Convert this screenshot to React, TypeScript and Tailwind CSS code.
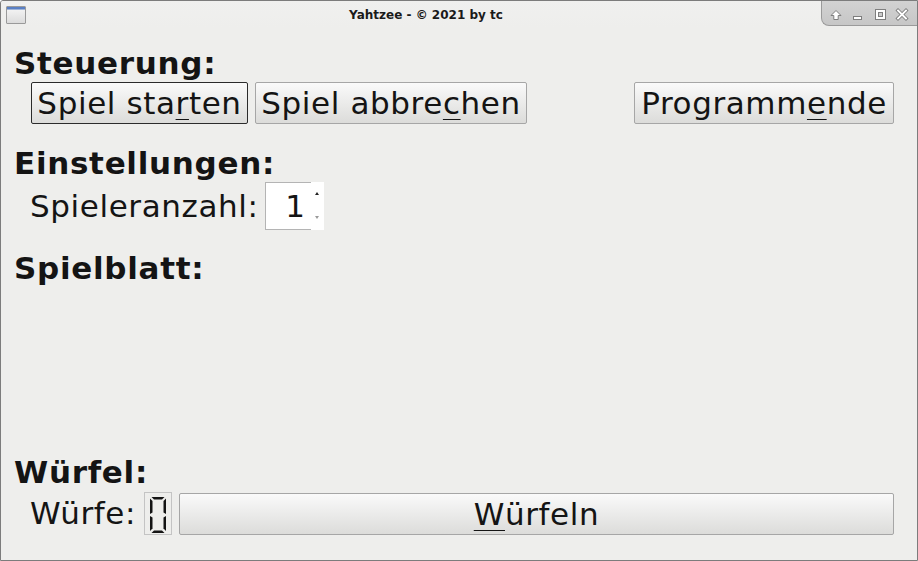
import React from "react";

function U({ children }: { children: React.ReactNode }) {
  return <span className="underline decoration-1 underline-offset-[5px]">{children}</span>;
}

function Btn({ w, focused, children }: { w?: string; focused?: boolean; children: React.ReactNode }) {
  return (
    <div
      className={
        "h-[42px] flex items-center justify-center rounded-[2px] border bg-linear-to-b from-[#fafafa] to-[#dcdcda] text-[31px] leading-none tracking-[0.6px] whitespace-nowrap " +
        (focused ? "border-[#2b2b2b] " : "border-[#a6a6a6] ") +
        (w ?? "")
      }
    >
      {children}
    </div>
  );
}

function Heading({ children, cls }: { children: React.ReactNode; cls?: string }) {
  return (
    <div className={"h-[38px] flex items-center text-[31px] font-bold tracking-[0.7px] leading-none " + (cls ?? "")}>
      {children}
    </div>
  );
}

function Lcd() {
  const c = "#141414";
  return (
    <div className="w-[28px] h-[43px] border border-[#c4c4c4] shrink-0">
      <svg width="26" height="41" viewBox="0 0 26 41">
        <polygon points="6.5,4 19.5,4 17,6.5 9,6.5" fill={c} />
        <polygon points="5,5.5 7.5,8 7.5,19.5 5,21" fill={c} />
        <polygon points="21,5.5 18.5,8 18.5,19.5 21,21" fill={c} />
        <polygon points="5,23 7.5,24.5 7.5,35.5 5,38" fill={c} />
        <polygon points="21,23 18.5,24.5 18.5,35.5 21,38" fill={c} />
        <polygon points="9,37.5 17,37.5 19.5,40 6.5,40" fill={c} />
      </svg>
    </div>
  );
}

export default function App() {
  return (
    <div className="w-[918px] h-[561px] bg-[#eeeeec] border border-[#7c7c7c] rounded-tl-[3px] flex flex-col font-['DejaVu_Sans',sans-serif] text-[#141414] overflow-hidden">
      {/* title bar */}
      <div className="h-[27px] shrink-0 flex items-start bg-linear-to-b from-[#f0f0ef] to-[#eeeeec]">
        <div className="w-[30px] pl-[5px] pt-[5px] shrink-0">
          <div className="w-[20px] h-[18px] border border-[#9a9a9a] rounded-[1px] bg-linear-to-b from-[#f7f7f7] to-[#dcdcdc] overflow-hidden">
            <div className="h-[3px] bg-[#5a80c4] border-b border-[#9fb4d8]" />
          </div>
        </div>
        <div className="flex-1 text-center text-[12px] font-bold leading-[29px] text-[#1a1a1a]">
          Yahtzee - © 2021 by tc
        </div>
        <div className="w-[96px] h-[25px] shrink-0 bg-linear-to-b from-[#d2d2d2] to-[#c6c6c6] border-l border-b border-[#9a9a9a] rounded-bl-[8px]">
          <svg width="96" height="25" viewBox="0 0 96 25">
            {/* up arrow */}
            <path d="M14 9.5 L19 14.5 L16.2 14.5 L16.2 18.5 L11.8 18.5 L11.8 14.5 L9 14.5 Z" fill="#ffffff" stroke="#7e7e7e" strokeWidth="1" strokeLinejoin="round" />
            {/* minimize */}
            <rect x="31.5" y="15.5" width="8" height="3" fill="#ffffff" stroke="#7e7e7e" strokeWidth="1" />
            {/* maximize */}
            <rect x="53.5" y="8.5" width="10" height="10" fill="none" stroke="#7e7e7e" strokeWidth="1" />
            <rect x="55" y="10" width="7" height="7" fill="none" stroke="#ffffff" strokeWidth="2" />
            <rect x="56.5" y="11.5" width="4" height="4" fill="none" stroke="#7e7e7e" strokeWidth="1" />
            {/* close */}
            <path d="M76 9.5 L84 17.5 M84 9.5 L76 17.5" stroke="#7e7e7e" strokeWidth="3.6" strokeLinecap="square" />
            <path d="M76 9.5 L84 17.5 M84 9.5 L76 17.5" stroke="#ffffff" strokeWidth="1.8" strokeLinecap="square" />
          </svg>
        </div>
      </div>

      {/* body */}
      <div className="flex-1 flex flex-col pl-[13px] pr-[23px] pb-[24px]">
        <Heading cls="mt-[16px] h-[37px]">Steuerung:</Heading>
        <div className="flex items-center pl-[17px] gap-[7px]">
          <Btn w="w-[217px]" focused>
            Spiel sta<U>r</U>ten
          </Btn>
          <Btn w="w-[272px]">
            Spiel abbre<U>c</U>hen
          </Btn>
          <div className="flex-1" />
          <Btn w="w-[260px]">
            Programm<U>e</U>nde
          </Btn>
        </div>
        <Heading cls="mt-[20px]">Einstellungen:</Heading>
        <div className="h-[48px] flex items-center pl-[16px]">
          <div className="w-[235px] text-[31px] leading-none tracking-[0.6px]">Spieleranzahl:</div>
          <div className="h-[48px] w-[59px] flex bg-white">
            <div className="flex-1 border border-r-0 border-[#b4b4b4] flex items-center justify-end pr-[6px] text-[31px] leading-none">
              1
            </div>
            <div className="w-[13px] relative">
              <div className="absolute left-[4px] top-[10px] w-0 h-0 border-l-[2px] border-r-[2px] border-b-[3px] border-l-transparent border-r-transparent border-b-[#222]" />
              <div className="absolute left-[4px] top-[34px] w-0 h-0 border-l-[2px] border-r-[2px] border-t-[3px] border-l-transparent border-r-transparent border-t-[#9a9a9a]" />
            </div>
          </div>
        </div>
        <Heading cls="mt-[19px]">Spielblatt:</Heading>
        <div className="flex-1" />
        <Heading>Würfel:</Heading>
        <div className="h-[45px] flex items-center pl-[16px]">
          <div className="w-[114px] text-[31px] leading-none tracking-[0.6px]">Würfe:</div>
          <Lcd />
          <div className="flex-1 ml-[7px] mt-[1px]">
            <Btn>
              <U>W</U>ürfeln
            </Btn>
          </div>
        </div>
      </div>
    </div>
  );
}
